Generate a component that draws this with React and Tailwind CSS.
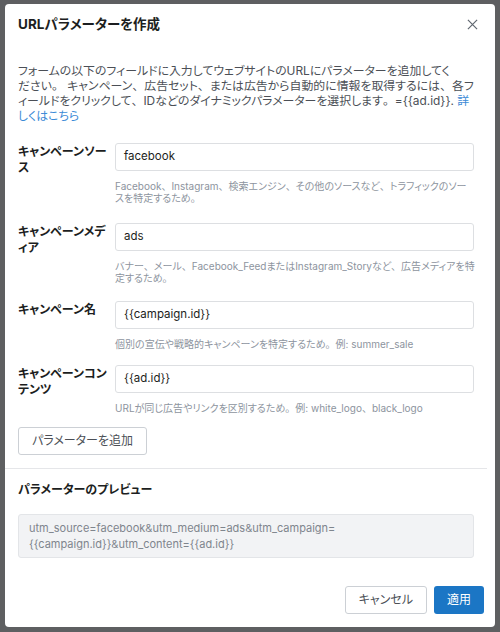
import React from "react";

const fields = [
  {
    label: "キャンペーンソース",
    value: "facebook",
    help: ["Facebook、Instagram、検索エンジン、その他のソースなど、トラフィックのソー", "スを特定するため。"],
    gap: "mt-0",
  },
  {
    label: "キャンペーンメディア",
    value: "ads",
    help: ["バナー、メール、Facebook_FeedまたはInstagram_Storyなど、広告メディアを特", "定するため。"],
    gap: "mt-[19px]",
  },
  {
    label: "キャンペーン名",
    value: "{{campaign.id}}",
    help: ["個別の宣伝や戦略的キャンペーンを特定するため。例: summer_sale"],
    gap: "mt-[17px]",
  },
  {
    label: "キャンペーンコンテンツ",
    value: "{{ad.id}}",
    help: ["URLが同じ広告やリンクを区別するため。例: white_logo、black_logo"],
    gap: "mt-[15px]",
  },
];

// keep 、 and 。 full width while kana use proportional widths
function Jp({ text }) {
  return text.split(/([、。])/).map((s, i) =>
    s === "、" || s === "。" ? (
      <span key={i} className="[font-feature-settings:normal]">
        {s}
      </span>
    ) : (
      s
    )
  );
}

function Lines({ lines }) {
  return lines.map((l, i) => (
    <React.Fragment key={i}>
      {i > 0 && <br />}
      <Jp text={l} />
    </React.Fragment>
  ));
}

function FieldRow({ field }) {
  return (
    <div className={`flex ${field.gap}`}>
      <div className="w-[97px] shrink-0 pt-[1px] pr-[6px] text-[12px] font-bold leading-[16px] text-[#1c1e21]">
        {field.label}
      </div>
      <div className="min-w-0 flex-1">
        <div className="flex h-[28px] items-center rounded-[3px] border border-[#dddfe2] px-[8px] text-[11.5px] text-[#1c1e21]">
          {field.value}
        </div>
        <p className="mt-[9px] whitespace-nowrap text-[10px] leading-[12px] text-[#8d949e]">
          <Lines lines={field.help} />
        </p>
      </div>
    </div>
  );
}

export default function App() {
  return (
    <div
      className="h-[632px] w-[500px] overflow-hidden bg-[#5e5f61] pl-[5px] pt-[4px] [font-feature-settings:'palt']"
      style={{ fontFamily: 'Inter, "Noto Sans CJK JP", sans-serif' }}
    >
      <div className="flex h-[623px] w-[490px] flex-col rounded-[4px] bg-white">
        {/* Header */}
        <div className="flex items-center justify-between pl-[13px] pr-[14px] pt-[11px]">
          <h2 className="text-[13.5px] font-bold leading-[18px] text-[#1c1e21]">URLパラメーターを作成</h2>
          <button className="flex h-[18px] w-[18px] items-center justify-center text-[#606770]">
            <svg width="11" height="11" viewBox="0 0 12 12" fill="none" stroke="currentColor" strokeWidth="1.3">
              <path d="M1 1l10 10M11 1L1 11" />
            </svg>
          </button>
        </div>

        {/* Body */}
        <div className="mr-[8px] pl-[13px] pr-[13px]">
          <p className="mt-[30px] whitespace-nowrap text-[11.9px] leading-[15px] text-[#4b4f56]">
            <Jp text="フォームの以下のフィールドに入力してウェブサイトのURLにパラメーターを追加してく" />
            <br />
            <Jp text="ださい。 キャンペーン、広告セット、または広告から自動的に情報を取得するには、各フ" />
            <br />
            <Jp text="ィールドをクリックして、IDなどのダイナミックパラメーターを選択します。={{ad.id}}. " />
            <a className="text-[#3b8ad6]">
              詳<br />しくはこちら
            </a>
          </p>

          <div className="mt-[20px] flex flex-col">
            {fields.map((f) => (
              <FieldRow key={f.label} field={f} />
            ))}
          </div>

          <button className="mt-[13px] h-[28px] rounded-[3px] border border-[#ccd0d5] px-[13px] text-[12px] text-[#4b4f56]">
            パラメーターを追加
          </button>
        </div>

        <div className="mr-[8px] mt-[13px] border-t border-[#e5e6e9]" />

        <div className="pl-[13px] pr-[21px]">
          <h3 className="mt-[13px] text-[12px] font-bold leading-[16px] text-[#1c1e21]">パラメーターのプレビュー</h3>
          <div className="mt-[16px] rounded-[3px] border border-[#e3e5e8] bg-[#f2f3f5] px-[10px] py-[5px] text-[11px] leading-[16px] text-[#7f858d]">
            utm_source=facebook&utm_medium=ads&utm_campaign=
            <br />
            {"{{campaign.id}}&utm_content={{ad.id}}"}
          </div>
        </div>

        {/* Footer */}
        <div className="mt-auto flex justify-end gap-[7px] pb-[13px] pr-[11px]">
          <button className="h-[28px] rounded-[3px] border border-[#ccd0d5] px-[13px] text-[12px] text-[#4b4f56]">
            キャンセル
          </button>
          <button className="h-[28px] rounded-[3px] bg-[#1b76c5] px-[13px] text-[12px] text-white">
            適用
          </button>
        </div>
      </div>
    </div>
  );
}
